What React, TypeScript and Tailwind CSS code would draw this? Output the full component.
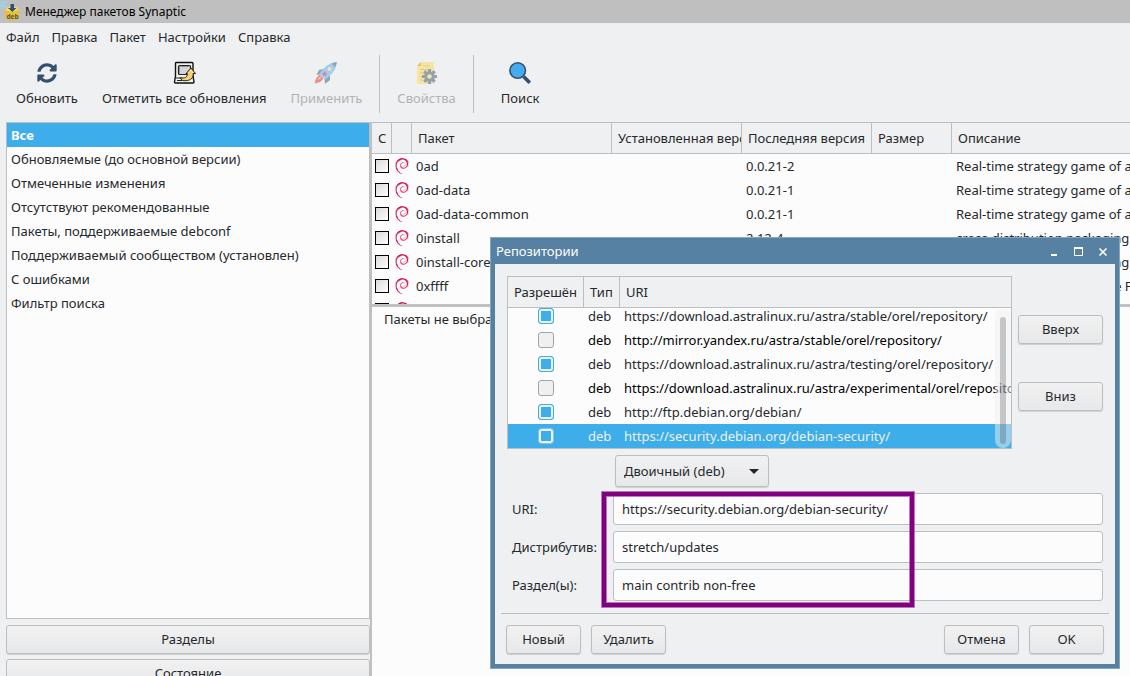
import React from "react";
import { FaSyncAlt } from "react-icons/fa";
import { SiDebian } from "react-icons/si";

const categories = [
  "Все",
  "Обновляемые (до основной версии)",
  "Отмеченные изменения",
  "Отсутствуют рекомендованные",
  "Пакеты, поддерживаемые debconf",
  "Поддерживаемый сообществом (установлен)",
  "С ошибками",
  "Фильтр поиска",
];

const packages = [
  { name: "0ad", version: "0.0.21-2", description: "Real-time strategy game of ancient warfare" },
  { name: "0ad-data", version: "0.0.21-1", description: "Real-time strategy game of ancient warfare (data files)" },
  { name: "0ad-data-common", version: "0.0.21-1", description: "Real-time strategy game of ancient warfare (common data files)" },
  { name: "0install", version: "2.12-4", description: "cross-distribution packaging system" },
  { name: "0install-core", version: "2.12-4", description: "cross-distribution packaging system (non-GUI parts)" },
  { name: "0xffff", version: "0.7-2", description: "Open Free Fiasco Firmware Flasher" },
  { name: "2048-qt", version: "0.1.6-1", description: "mathematics based puzzle game" },
];

const repositories = [
  { uri: "https://download.astralinux.ru/astra/stable/orel/repository/", on: true },
  { uri: "http://mirror.yandex.ru/astra/stable/orel/repository/", on: false },
  { uri: "https://download.astralinux.ru/astra/testing/orel/repository/", on: true },
  { uri: "https://download.astralinux.ru/astra/experimental/orel/repository/", on: false },
  { uri: "http://ftp.debian.org/debian/", on: true },
  { uri: "https://security.debian.org/debian-security/", on: false, selected: true },
];

function AppIcon() {
  return (
    <svg width="20" height="22" viewBox="0 0 20 22" aria-hidden="true">
      <path d="M5 9l3-3h9l2 3v8l-7 3-7-3z" fill="#e9bf35" />
      <path d="M5 9l7 2 7-2-2-3H8z" fill="#f7da6e" />
      <path d="M10.500 3h3.500v4h2.500l-4.200 4L8 7h2.500z" fill="#34506e" />
      <path d="M3 0v8M-1 1l8 5.500M7 0L-1 6.500" stroke="#9ad3ea" strokeWidth="1.800" />
      <text x="6.500" y="17.500" fontSize="6.500" fontWeight="700" fill="#4f5a4a" fontFamily="Noto Sans, sans-serif">deb</text>
    </svg>
  );
}

function MarkUpgradesIcon() {
  return (
    <svg width="24" height="24" viewBox="0 0 24 24" aria-hidden="true">
      <path d="M4 1.500h16q1 0 1 1V15l1 6q0 1-1 1H3.500q-1 0-1-1L3.500 15V2.500q0-1 .5-1z" fill="#f1f1ee" stroke="#111" strokeWidth="1.400" />
      <rect x="6.500" y="4.500" width="12" height="9" rx="1" fill="#d3d6d8" stroke="#222" strokeWidth="1.200" />
      <path d="M7.500 12.500v-7h10" fill="none" stroke="#8b9196" />
      <path d="M3.500 17h7M5 19.500h5" stroke="#222" strokeWidth="1" />
      <path d="M19 7l4.500 5.500h-2.300c.2 5-3.200 8-10.700 7l-2.500-2.700c5 .8 7.500-.6 7.300-4.300H14z" fill="#f4cf76" stroke="#17120a" strokeWidth="0.900" strokeLinejoin="round" />
      <path d="M18.800 9l1.700 2.500" stroke="#fff0bd" strokeWidth="1" />
    </svg>
  );
}

function RocketIcon() {
  return (
    <svg width="24" height="24" viewBox="0 0 24 24" aria-hidden="true">
      <path d="M9 8L5 9 2.500 14l6-1zM16 14v5l-5 4-.5-6z" fill="#93a4b4" />
      <path d="M5.500 13.500L2 17.500.5 22.500l5.500-1.500 3.500-3.500z" fill="#e88b89" />
      <path d="M6 15.500l-3 4 4.200-2.500z" fill="#fae4a1" />
      <path d="M22.500 1c.5 6-3.500 12-11.500 17.500L5.500 13C10 5.500 16 1.500 22.500 1z" fill="#a0cdf1" />
      <path d="M22.800.8l-5 1.700 3.200 3.800c1-1.700 1.600-3.500 1.800-5.500z" fill="#93a4b4" />
      <circle cx="15.500" cy="8" r="2" fill="#f7e4a3" />
      <path d="M10.500 10l.8 1.800 2 .1-1.500 1.400.6 2-1.900-1-1.800 1 .5-2-1.400-1.400 1.900-.2z" fill="#db8293" />
    </svg>
  );
}

function PropertiesIcon() {
  const teeth = [0, 45, 90, 135, 180, 225, 270, 315];
  return (
    <svg width="24" height="24" viewBox="0 0 24 24" aria-hidden="true">
      <path d="M6 1h13v22H2V5z" fill="#f7e3a2" />
      <path d="M6 1v4H2z" fill="#dfc373" />
      <path d="M8 5h7M5 8.500h11M5 12h7M5 15.500h3M5 19h3" stroke="#dfca87" strokeWidth="1.200" />
      <g fill="#92a1ae">
        {teeth.map((angle) => (
          <rect key={angle} x="12.900" y="8" width="3.200" height="4" rx="0.600" transform={`rotate(${angle} 14.500 15.500)`} />
        ))}
        <circle cx="14.500" cy="15.500" r="5.200" />
      </g>
      <circle cx="14.500" cy="15.500" r="2.300" fill="#f7e3a2" />
    </svg>
  );
}

function SearchIcon() {
  return (
    <svg width="24" height="24" viewBox="0 0 24 24" aria-hidden="true">
      <path d="M15.500 15.500l6.300 6.300" stroke="#34506e" strokeWidth="3.600" />
      <circle cx="9.700" cy="9.500" r="7.800" fill="#44abf0" stroke="#34506e" strokeWidth="1.600" />
    </svg>
  );
}

function ToolButton({ label, disabled, children }: { label: string; disabled?: boolean; children: React.ReactNode }) {
  return (
    <button
      disabled={disabled}
      className="flex flex-col items-center gap-[3px] px-3 pt-[9px] whitespace-nowrap disabled:text-[#b1b3b5]"
    >
      <span className="flex h-6 items-center">{children}</span>
      <span className="leading-5">{label}</span>
    </button>
  );
}

function PushButton({ className, children }: { className: string; children: React.ReactNode }) {
  return (
    <button
      className={`h-[29px] shrink-0 rounded-[3px] border border-[#bcbebf] bg-linear-to-b from-[#f1f1f2] to-[#e7e8e9] shadow-[0_1px_1px_rgba(0,0,0,0.14)] ${className}`}
    >
      {children}
    </button>
  );
}

function RepoCheckbox({ uri, on, selected }: { uri: string; on: boolean; selected?: boolean }) {
  const look = selected
    ? "border-[#7fc4ec] bg-[#3daee9] shadow-[inset_0_0_0_2px_#eff0f1]"
    : on
      ? "border-[#3daee9] bg-[#3daee9] shadow-[inset_0_0_0_2px_#eff0f1]"
      : "border-[#a0a2a4] bg-[#eff0f1]";
  return (
    <input
      type="checkbox"
      aria-label={uri}
      defaultChecked={on}
      className={`mx-auto block size-4 appearance-none rounded-[3px] border ${look}`}
    />
  );
}

function Field({ id, label, value }: { id: string; label: string; value: string }) {
  return (
    <div className="flex items-center">
      <label htmlFor={id} className="w-[101px] shrink-0 leading-5">{label}</label>
      <input
        id={id}
        defaultValue={value}
        className="h-8 min-w-0 flex-1 rounded-[3px] border border-[#bcbebf] bg-[#fcfcfc] px-2 outline-none"
      />
    </div>
  );
}

function RepositoriesDialog() {
  return (
    <section
      role="dialog"
      aria-label="Репозитории"
      className="absolute top-[237px] left-[490px] flex w-[630px] flex-col border border-[#87a5bd] bg-[#5681a3] px-1 pb-1"
    >
      <header className="flex h-[26px] items-center justify-between pr-1.5 pl-px text-white">
        <h2 className="leading-5">Репозитории</h2>
        <div className="flex items-center gap-3 pt-0.5">
          <button aria-label="Свернуть" className="size-3">
            <svg width="12" height="12" viewBox="0 0 12 12"><path d="M2 9h6" stroke="#fff" strokeWidth="2" /></svg>
          </button>
          <button aria-label="Развернуть" className="size-3">
            <svg width="12" height="12" viewBox="0 0 12 12"><path d="M1.500 2.500h8v7h-8z" fill="none" stroke="#fff" /><path d="M1 2h9" stroke="#fff" strokeWidth="2" /></svg>
          </button>
          <button aria-label="Закрыть" className="size-3">
            <svg width="12" height="12" viewBox="0 0 12 12"><path d="M2.500 2.500l7 7M9.500 2.500l-7 7" stroke="#fff" strokeWidth="1.600" /></svg>
          </button>
        </div>
      </header>

      <div className="bg-[#eff0f1] pt-3">
        <div className="flex gap-1.5 px-3">
          <div className="relative h-[173px] min-w-0 flex-1 overflow-hidden border border-[#bcbebf] bg-[#fcfcfc]">
            <table className="w-full table-fixed border-separate border-spacing-0 text-left whitespace-nowrap">
              <colgroup>
                <col className="w-[76px]" />
                <col className="w-9" />
                <col />
              </colgroup>
              <thead>
                <tr className="h-[31px] bg-[#eff0f1] shadow-[inset_0_-1px_0_#bcbebf]">
                  <th className="border-r border-[#bcbebf] p-0 pl-1.5 font-normal">Разрешён</th>
                  <th className="border-r border-[#bcbebf] p-0 pl-1.5 font-normal">Тип</th>
                  <th className="p-0 pl-1.5 font-normal">URI</th>
                </tr>
              </thead>
              <tbody>
                {repositories.map((repo, index) => {
                  const tone = repo.selected ? "bg-[#3daee9] text-[#eff0f1]" : repo.on ? "" : "text-black";
                  const edge = index === 0 ? "pb-1" : "";
                  return (
                    <tr key={repo.uri} className={`${index === 0 ? "h-5" : "h-6"} leading-4 ${tone}`}>
                      <td className={edge}><RepoCheckbox {...repo} /></td>
                      <td className={`pl-1 ${edge}`}>deb</td>
                      <td className={`pl-1 ${edge}`}>{repo.uri}</td>
                    </tr>
                  );
                })}
              </tbody>
            </table>
            <div className="absolute top-8 right-0 bottom-0 w-4 rounded-lg bg-[#eff0f1]/50 px-[5px] pt-2 pb-1">
              <div className="h-full rounded-full bg-[#31363b]/25" />
            </div>
          </div>
          <div className="flex flex-col gap-[38px] pt-[39px]">
            <PushButton className="w-[85px]">Вверх</PushButton>
            <PushButton className="w-[85px]">Вниз</PushButton>
          </div>
        </div>

        <div className="relative mt-1.5 ml-[120px] h-8 w-[154px]">
          <select
            aria-label="Тип репозитория"
            className="h-full w-full appearance-none rounded-[3px] border border-[#bcbebf] bg-linear-to-b from-[#f1f1f2] to-[#e7e8e9] px-2 pt-0.5 shadow-[0_1px_1px_rgba(0,0,0,0.14)]"
          >
            <option>Двоичный (deb)</option>
            <option>Исходный код (deb-src)</option>
          </select>
          <svg width="10" height="6" viewBox="0 0 10 6" className="pointer-events-none absolute top-3.5 right-2.5" aria-hidden="true">
            <path d="M0 0h10L5 5z" fill="#232629" />
          </svg>
        </div>

        <div className="relative mt-1.5 flex flex-col gap-1.5 pr-3 pl-[17px]">
          <Field id="uri" label="URI:" value="https://security.debian.org/debian-security/" />
          <Field id="distribution" label="Дистрибутив:" value="stretch/updates" />
          <Field id="sections" label="Раздел(ы):" value="main contrib non-free" />
          <div className="pointer-events-none absolute -top-px left-[107px] h-[115px] w-[312px] border-4 border-[#800080] shadow-[0_0_0_1px_rgba(128,0,128,0.5),inset_0_0_0_1px_rgba(128,0,128,0.5)]" />
        </div>

        <hr className="mx-1.5 mt-3 border-[#bcbebf]" />
        <footer className="flex gap-2.5 px-[11px] pt-[11px] pb-[10px]">
          <PushButton className="w-[75px]">Новый</PushButton>
          <PushButton className="w-[75px]">Удалить</PushButton>
          <span className="flex-1" />
          <PushButton className="w-[75px]">Отмена</PushButton>
          <PushButton className="w-[75px]">OK</PushButton>
        </footer>
      </div>
    </section>
  );
}

function PackageTable() {
  const head = "border-r border-[#bcbebf] overflow-hidden p-0 pl-1.5 font-normal";
  return (
    <div className="h-[182px] shrink-0 overflow-hidden border-t border-[#bcbebf] bg-[#fcfcfc]">
      <table className="w-full table-fixed border-separate border-spacing-0 text-left whitespace-nowrap">
        <colgroup>
          <col className="w-5" />
          <col className="w-5" />
          <col className="w-[200px]" />
          <col className="w-[130px]" />
          <col className="w-[130px]" />
          <col className="w-20" />
          <col />
        </colgroup>
        <thead>
          <tr className="h-[31px] bg-[#eff0f1] shadow-[inset_0_-1px_0_#bcbebf]">
            <th className={head}>С</th>
            <th className={head} aria-label="Источник" />
            <th className={head}>Пакет</th>
            <th className={head}>Установленная версия</th>
            <th className={head}>Последняя версия</th>
            <th className={head}>Размер</th>
            <th className="overflow-hidden p-0 pl-1.5 font-normal">Описание</th>
          </tr>
        </thead>
        <tbody>
          {packages.map((pkg) => (
            <tr key={pkg.name} className="h-6 leading-4">
              <td className="p-0 pl-[3px]">
                <input
                  type="checkbox"
                  aria-label={pkg.name}
                  className="block size-[14px] appearance-none border border-black bg-linear-to-br from-[#d9d9d9] to-white"
                />
              </td>
              <td className="p-0 pl-0.5">
                <SiDebian size={16} color="#cf1453" stroke="#cf1453" strokeWidth={0.3} />
              </td>
              <td className="p-0 pl-1">{pkg.name}</td>
              <td />
              <td className="p-0 pl-1">{pkg.version}</td>
              <td />
              <td className="overflow-hidden p-0 pl-1">{pkg.description}</td>
            </tr>
          ))}
        </tbody>
      </table>
    </div>
  );
}

export default function App() {
  return (
    <div className="relative flex h-screen flex-col overflow-hidden bg-[#eff0f1] font-['Noto_Sans',sans-serif] text-[13px] text-[#26292c]">
      <header className="flex h-[23px] shrink-0 items-center gap-[5px] bg-[#bfbfbf] text-[12px] text-black">
        <AppIcon />
        <h1>Менеджер пакетов Synaptic</h1>
      </header>

      <nav className="flex h-[29px] shrink-0 items-center gap-3 px-1.5">
        {["Файл", "Правка", "Пакет", "Настройки", "Справка"].map((item) => (
          <button key={item}>{item}</button>
        ))}
      </nav>

      <div className="flex h-[70px] shrink-0 items-start pl-1">
        <ToolButton label="Обновить"><FaSyncAlt size={20} color="#34506e" /></ToolButton>
        <ToolButton label="Отметить все обновления"><MarkUpgradesIcon /></ToolButton>
        <ToolButton label="Применить" disabled><RocketIcon /></ToolButton>
        <span className="mt-[3px] mr-[5px] ml-[5px] h-[58px] w-px bg-[#bcbebf]" />
        <ToolButton label="Свойства" disabled><PropertiesIcon /></ToolButton>
        <span className="mt-[3px] mr-[15px] ml-[5px] h-[58px] w-px bg-[#bcbebf]" />
        <ToolButton label="Поиск"><SearchIcon /></ToolButton>
      </div>

      <main className="flex min-h-0 flex-1">
        <aside className="flex w-[370px] shrink-0 flex-col pl-1.5">
          <ul className="min-h-0 flex-1 border border-[#bcbebf] bg-[#fcfcfc]">
            {categories.map((category, index) => (
              <li
                key={category}
                className={`h-6 px-1 leading-6 ${index === 0 ? "bg-[#3daee9] font-bold text-white" : ""}`}
              >
                {category}
              </li>
            ))}
          </ul>
          <div className="flex h-[57px] shrink-0 flex-col gap-[5px] overflow-hidden pt-1.5">
            <PushButton className="w-full">Разделы</PushButton>
            <PushButton className="w-full">Состояние</PushButton>
          </div>
        </aside>
        <div className="w-0.5 shrink-0 bg-[#bfc0c1]" />
        <section className="flex min-w-0 flex-1 flex-col">
          <PackageTable />
          <div className="h-[3px] shrink-0 bg-[#bfc0c1]" />
          <p className="flex-1 bg-[#fcfcfc] px-3 pt-0.5 leading-5">Пакеты не выбраны.</p>
        </section>
      </main>

      <RepositoriesDialog />
    </div>
  );
}
